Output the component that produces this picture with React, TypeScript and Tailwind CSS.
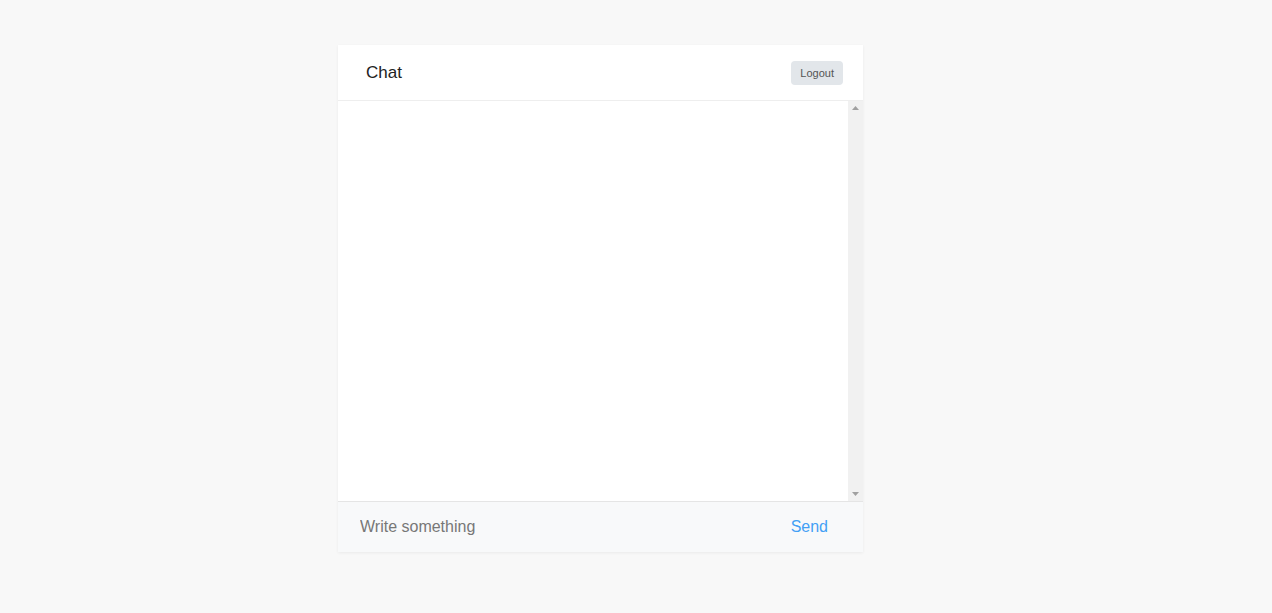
export default function App() {
  return (
    <div
      className="min-h-[613px] bg-[#f8f8f8] pt-[45px]"
      style={{ fontFamily: '"Liberation Sans", Arial, sans-serif' }}
    >
      <div className="ml-[338px] flex w-[525px] flex-col bg-white shadow-[0_1px_3px_rgba(0,0,0,0.06)]">
        <header className="flex h-[56px] items-center justify-between border-b border-[#eeeeee] pl-[28px] pr-[20px]">
          <h1 className="text-[17px] text-[#222]">Chat</h1>
          <button className="h-[24px] rounded-[4px] bg-[#e2e6ea] px-[9px] pt-[1px] text-[11px] text-[#555]">
            Logout
          </button>
        </header>
        <div className="flex h-[400px]">
          <div className="flex-1"></div>
          {/* fake classic scrollbar */}
          <div className="flex w-[15px] flex-col items-center justify-between bg-[#f1f1f1] py-[5px]">
            <svg width="7" height="4" viewBox="0 0 7 4">
              <path d="M3.5 0 L7 4 L0 4 Z" fill="#a0a0a0" />
            </svg>
            <svg width="7" height="4" viewBox="0 0 7 4">
              <path d="M0 0 L7 0 L3.5 4 Z" fill="#a0a0a0" />
            </svg>
          </div>
        </div>
        <form
          className="flex h-[51px] items-center border-t border-[#e5e5e5] bg-[#f8f9fa] pl-[22px] pr-[35px]"
          onSubmit={(e) => e.preventDefault()}
        >
          <input
            className="flex-1 bg-transparent text-[16px] text-[#333] outline-none placeholder:text-[#777]"
            placeholder="Write something"
          />
          <button className="text-[16px] text-[#42a0f5]">Send</button>
        </form>
      </div>
    </div>
  );
}
